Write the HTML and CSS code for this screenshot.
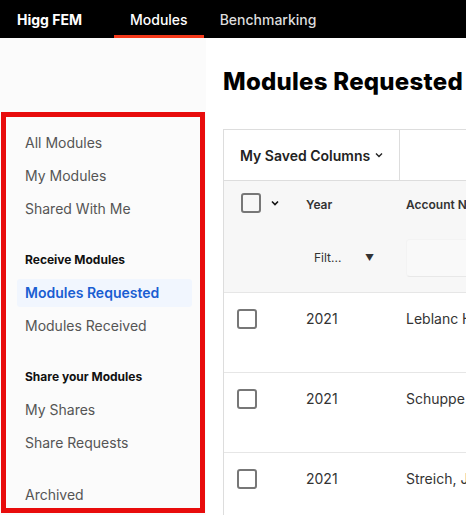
FILE: index.html
```html
<!DOCTYPE html>
<html lang="en">
<head>
    <meta charset="UTF-8">
    <meta name="viewport" content="width=device-width, initial-scale=1.0">
    <title>Modules Requested</title>
    <link rel="stylesheet" href="styles.css">
</head>
<body>
    <!-- Top Navigation -->
    <header class="topbar">
        <span class="brand">Higg FEM</span>
        <a class="tab tab-active">Modules</a>
        <a class="tab">Benchmarking</a>
    </header>

    <div class="layout">
        <!-- Sidebar -->
        <aside class="sidebar">
            <nav class="side-nav">
                <a class="side-link">All Modules</a>
                <a class="side-link">My Modules</a>
                <a class="side-link">Shared With Me</a>

                <div class="side-heading">Receive Modules</div>
                <a class="side-link active">Modules Requested</a>
                <a class="side-link">Modules Received</a>

                <div class="side-heading">Share your Modules</div>
                <a class="side-link">My Shares</a>
                <a class="side-link">Share Requests</a>

                <a class="side-link archived">Archived</a>
            </nav>
        </aside>

        <!-- Main Content -->
        <main class="content">
            <h1 class="page-title">Modules Requested</h1>

            <div class="data-table">
                <div class="toolbar">
                    <div class="toolbar-cell">
                        My Saved Columns
                        <svg class="chev" width="10" height="10" viewBox="0 0 10 10" aria-hidden="true">
                            <path d="M2 3.5 L5 6.5 L8 3.5" fill="none" stroke="#222" stroke-width="1.4"></path>
                        </svg>
                    </div>
                    <div class="toolbar-cell empty"></div>
                </div>

                <div class="table-row table-head">
                    <div class="cell select-cell head-select">
                        <span class="checkbox"></span>
                        <svg class="chev" width="10" height="10" viewBox="0 0 10 10" aria-hidden="true">
                            <path d="M2 3.5 L5 6.5 L8 3.5" fill="none" stroke="#111" stroke-width="1.6"></path>
                        </svg>
                    </div>
                    <div class="cell">
                        <div class="col-title">Year</div>
                        <div class="col-filter">
                            <span>Filt...</span>
                            <span class="caret">&#9660;</span>
                        </div>
                    </div>
                    <div class="cell">
                        <div class="col-title">Account Name</div>
                        <div class="filter-input"></div>
                    </div>
                </div>

                <div class="table-row">
                    <div class="cell select-cell"><span class="checkbox"></span></div>
                    <div class="cell">2021</div>
                    <div class="cell">Leblanc Hahn</div>
                </div>
                <div class="table-row">
                    <div class="cell select-cell"><span class="checkbox"></span></div>
                    <div class="cell">2021</div>
                    <div class="cell">Schuppe Group</div>
                </div>
                <div class="table-row">
                    <div class="cell select-cell"><span class="checkbox"></span></div>
                    <div class="cell">2021</div>
                    <div class="cell">Streich, Jones</div>
                </div>
            </div>
        </main>
    </div>
</body>
</html>
```

FILE: styles.css
```css
/* General Body Styling */
body {
    margin: 0;
    font-family: Inter, "Noto Sans", sans-serif;
    background-color: #ffffff;
    color: #333;
    height: 515px;
    overflow: hidden;
}

a {
    text-decoration: none;
}

/* Top Navigation */
.topbar {
    display: flex;
    align-items: stretch;
    height: 38px;
    background-color: #000000;
    padding-left: 17px;
}

.brand {
    display: flex;
    align-items: center;
    color: #ffffff;
    font-size: 14px;
    font-weight: 700;
    margin-right: 32px;
}

.tab {
    display: flex;
    align-items: center;
    padding: 3px 16px 0;
    color: #dddddd;
    font-size: 14px;
    font-weight: 500;
    border-bottom: 3px solid transparent;
    box-sizing: border-box;
}

.tab-active {
    color: #ffffff;
    border-bottom-color: #f5391a;
}

/* Layout */
.layout {
    display: flex;
    height: 477px;
}

/* Sidebar */
.sidebar {
    width: 206px;
    flex-shrink: 0;
    background-color: #fbfbfb;
    padding-top: 74px;
    box-sizing: border-box;
}

.side-nav {
    display: flex;
    flex-direction: column;
    margin-left: 1px;
    width: 204px;
    height: 401px;
    border: 5px solid #e80c0c;
    box-sizing: border-box;
    padding: 12px 8px 0 11px;
}

.side-link {
    height: 28px;
    line-height: 28px;
    margin-bottom: 5px;
    padding: 0 8px;
    border-radius: 3px;
    font-size: 14px;
    color: #555;
}

.side-link.active {
    background-color: #f1f6fe;
    color: #1a5ed2;
    font-weight: 600;
}

.side-link.archived {
    margin-top: 19px;
}

.side-heading {
    margin-top: 22px;
    margin-bottom: 9px;
    padding: 0 8px;
    line-height: 20px;
    font-size: 12px;
    font-weight: 700;
    color: #111;
}

/* Main Content */
.content {
    flex: 1;
    padding-left: 17px;
    overflow: hidden;
}

.page-title {
    margin: 29px 0 32px;
    line-height: 30px;
    font-size: 24px;
    font-weight: 800;
    color: #000;
    white-space: nowrap;
    letter-spacing: 0.25px;
}

/* Data Table */
.data-table {
    width: 700px;
    border-left: 1px solid #dddddd;
    border-top: 1px solid #dddddd;
}

.toolbar {
    display: flex;
    height: 50px;
    border-bottom: 1px solid #dddddd;
}

.toolbar-cell {
    display: flex;
    align-items: center;
    gap: 4px;
    width: 176px;
    padding-left: 16px;
    box-sizing: border-box;
    border-right: 1px solid #dddddd;
    font-size: 14px;
    font-weight: 600;
    color: #222;
}

.toolbar-cell.empty {
    flex: 1;
    border-right: none;
}

.table-row {
    display: grid;
    grid-template-columns: 66px 100px 1fr;
    height: 80px;
    border-bottom: 1px solid #e6e6e6;
    box-sizing: border-box;
}

.table-head {
    height: 112px;
    background-color: #f7f7f7;
}

.cell {
    padding: 16px 0 0 16px;
    font-size: 14px;
    line-height: 20px;
    color: #333;
}

.select-cell {
    padding-left: 13px;
}

.table-head .cell {
    padding-top: 14px;
}

.table-head .head-select {
    display: flex;
    align-items: flex-start;
    gap: 9px;
    padding: 12px 0 0 17px;
}

.head-select .chev {
    margin-top: 5px;
}

.checkbox {
    display: inline-block;
    width: 20px;
    height: 20px;
    border: 2px solid #777;
    border-radius: 3px;
    box-sizing: border-box;
    vertical-align: top;
}

.col-title {
    font-size: 12px;
    font-weight: 600;
    color: #333;
}

.col-filter {
    display: flex;
    align-items: center;
    justify-content: space-between;
    width: 60px;
    margin: 33px 0 0 8px;
    font-size: 12px;
    color: #333;
}

.caret {
    font-size: 9px;
    color: #333;
}

.filter-input {
    width: 200px;
    height: 36px;
    margin-top: 24px;
    border: 1px solid #f3f3f3;
    border-bottom-color: #e8e8e8;
    border-radius: 4px;
    background-color: #f9f9f9;
}
```
